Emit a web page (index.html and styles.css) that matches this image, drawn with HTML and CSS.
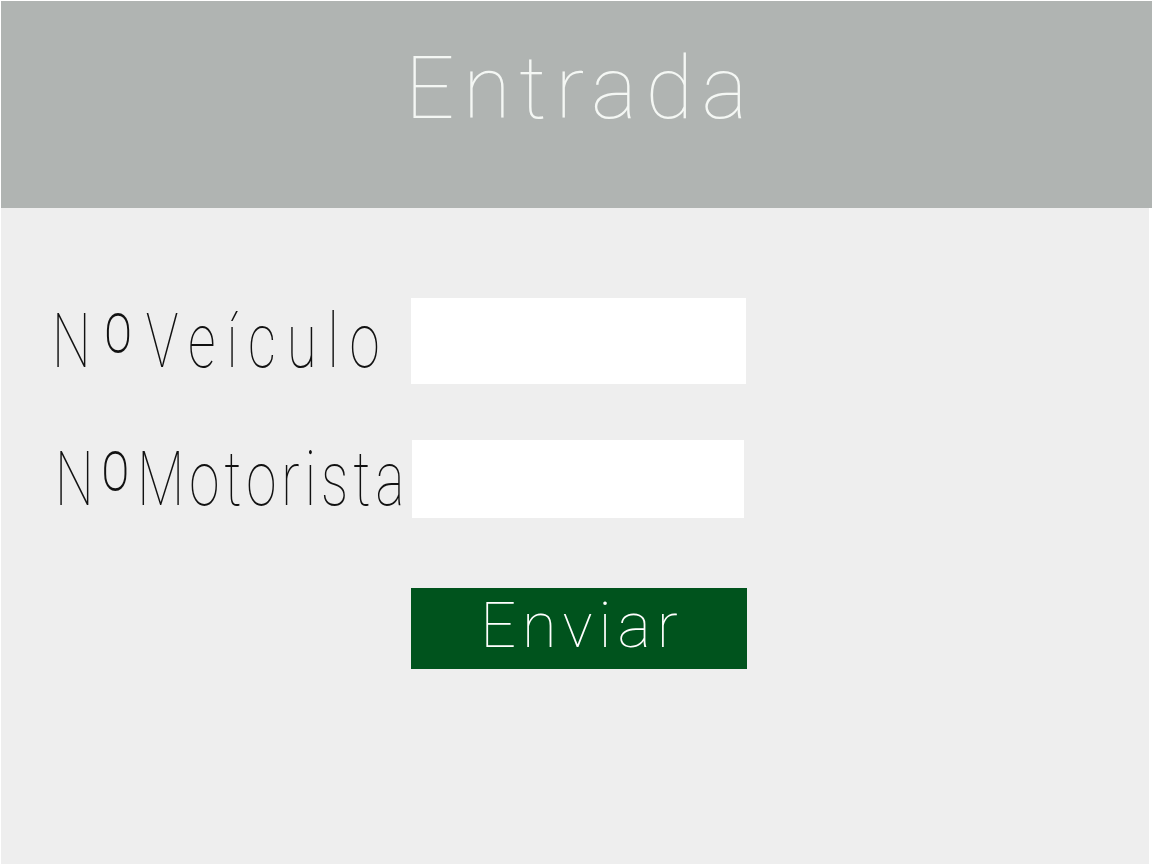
FILE: index.html
```html
<!DOCTYPE html>
<html lang="pt">
<head>
<meta charset="utf-8">
<title>Entrada</title>
<link rel="stylesheet" href="styles.css">
</head>
<body>
<div class="frame">
  <header class="header">
    <h1 class="title">Entrada</h1>
  </header>
  <main class="panel">
    <form class="form">
      <div class="row row-veiculo">
        <label class="label label-veiculo" for="veiculo"><span class="label-text">N<span class="ord">º</span>Veículo</span></label>
        <input class="field field-veiculo" id="veiculo" type="text">
      </div>
      <div class="row row-motorista">
        <label class="label label-motorista" for="motorista"><span class="label-text">N<span class="ord">º</span>Motorista</span></label>
        <input class="field field-motorista" id="motorista" type="text">
      </div>
      <div class="row row-button">
        <button class="send" type="button">Enviar</button>
      </div>
    </form>
  </main>
</div>
</body>
</html>
```
FILE: styles.css
```css
html, body {
  margin: 0;
  padding: 0;
  background: #ffffff;
}
body {
  font-family: Roboto, "Liberation Sans", sans-serif;
  font-weight: 100;
}
.frame {
  padding: 1px 0 0 1px;
  width: 1151px;
}
.header {
  background: #b0b4b2;
  height: 207px;
  box-sizing: border-box;
  padding-top: 44px;
}
.title {
  margin: 0;
  text-align: center;
  font-size: 87px;
  line-height: 87px;
  font-weight: 100;
  color: #f4f7f4;
  letter-spacing: 8.5px;
  padding-left: 8px;
}
.panel {
  background: #eeeeee;
  width: 1148px;
  height: 656px;
  box-sizing: border-box;
  padding-top: 90px;
}
.form {
  display: flex;
  flex-direction: column;
}
.row {
  display: flex;
  align-items: flex-start;
}
.row-motorista {
  margin-top: 56px;
}
.row-button {
  margin-top: 70px;
  padding-left: 410px;
}
.label {
  flex: none;
  color: #111111;
  font-size: 76px;
  font-weight: 100;
  box-sizing: border-box;
  white-space: nowrap;
  overflow: visible;
}
.label-text {
  display: inline-block;
  transform: scaleX(0.72);
  transform-origin: left center;
}
.ord {
  font-size: 104px;
  line-height: 0;
  vertical-align: -21px;
}
.label-veiculo {
  width: 410px;
  padding-left: 51px;
  line-height: 86px;
  letter-spacing: 15px;
}
.label-motorista {
  width: 411px;
  padding-left: 54px;
  line-height: 78px;
  letter-spacing: 7px;
}
.field {
  border: none;
  outline: none;
  background: #ffffff;
  margin: 0;
  padding: 0;
  box-sizing: border-box;
}
.field-veiculo {
  width: 335px;
  height: 86px;
}
.field-motorista {
  width: 332px;
  height: 78px;
}
.send {
  width: 336px;
  height: 81px;
  border: none;
  margin: 0;
  background: #00531d;
  color: #ffffff;
  font-family: Roboto, "Liberation Sans", sans-serif;
  font-weight: 100;
  font-size: 63px;
  line-height: 75px;
  padding: 0 0 6px 6px;
  letter-spacing: 6px;
  box-sizing: border-box;
}
```
